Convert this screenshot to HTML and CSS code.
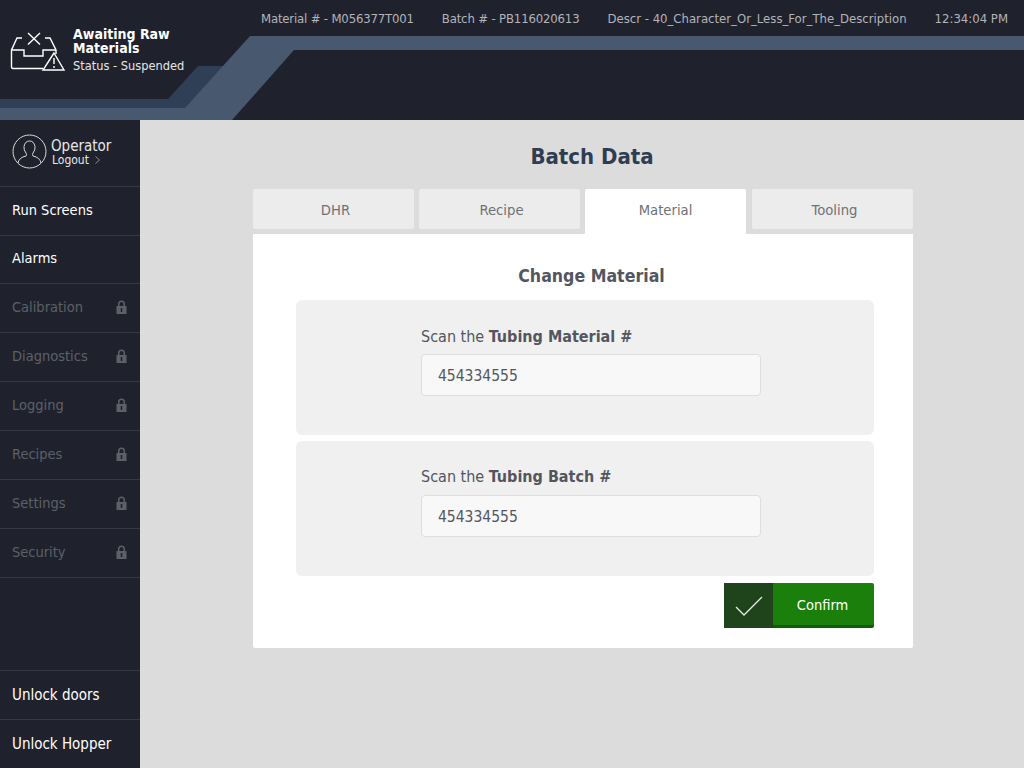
FILE: index.html
```html
<!DOCTYPE html>
<html lang="en">
<head>
    <meta charset="UTF-8">
    <meta name="viewport" content="width=device-width, initial-scale=1.0">
    <title>Batch Data</title>
    <link rel="stylesheet" href="styles.css">
</head>
<body>
    <svg class="defs" width="0" height="0">
        <symbol id="lock" viewBox="0 0 11 14">
            <path fill-rule="evenodd" d="M2 6V4a3.500 3.500 0 0 1 7 0v2h1.500v8H.5V6zm1.500 0h4V4a2 2 0 0 0-4 0zM4.700 8v4h1.600V8z"/>
        </symbol>
    </svg>

    <header class="topbar">
        <svg class="bands" width="1024" height="120" viewBox="0 0 1024 120">
            <polygon fill="#2e3f56" points="0,99 168,99 198,66 224,66 186,108 0,108"/>
            <polygon fill="#47586f" points="250,36 1024,36 1024,50 294,50 232,120 0,120 0,108 185,108"/>
        </svg>
        <div class="status">
            <svg class="status-icon" width="56" height="40" viewBox="0 0 56 40" fill="none" stroke="#fff" stroke-width="1.400">
                <path d="M12 7H7L1.500 19v17q0 1.500 1.500 1.500h30"/>
                <path d="M1.500 19H14v6h19v-6h13"/>
                <path d="M35 7h5l6 12v4"/>
                <path d="M18 2l12 11.500M30 2L18 13.500"/>
                <path d="M44 22L33 39h21zM44 27v6M44 35v2"/>
            </svg>
            <div class="status-text">
                <div class="status-title">Awaiting Raw Materials</div>
                <div class="status-sub">Status - Suspended</div>
            </div>
        </div>
        <div class="batch-info">
            <span class="info-material">Material # - M056377T001</span>
            <span class="info-batch">Batch # - PB116020613</span>
            <span>Descr - 40_Character_Or_Less_For_The_Description</span>
            <span>12:34:04 PM</span>
        </div>
    </header>

    <div class="layout">
        <nav class="sidebar">
            <div class="user">
                <svg width="35" height="35" viewBox="0 0 35 35" fill="none" stroke="#d8d8d8" stroke-width="1">
                    <circle cx="17.500" cy="17.500" r="16.500"/>
                    <path d="M6 29q1-5.500 8-7q1-1.500 0-3q-2.500-3-2-6.500q1-5.500 5.500-5.500t5.500 5.500q.5 3.500-2 6.500q-1 1.500 0 3q7 1.500 8 7"/>
                </svg>
                <div class="user-text">
                    <div class="user-name">Operator</div>
                    <div class="user-logout">Logout
                        <svg class="chevron" width="5" height="8" viewBox="0 0 5 8" fill="none" stroke="#8a8a8a"><path d="M.5.5L4.500 4L.5 7.500"/></svg>
                    </div>
                </div>
            </div>
            <a class="nav-item">Run Screens</a>
            <a class="nav-item nav-short">Alarms</a>
            <a class="nav-item locked">Calibration<svg class="lock" width="11" height="14"><use href="#lock"/></svg></a>
            <a class="nav-item locked">Diagnostics<svg class="lock" width="11" height="14"><use href="#lock"/></svg></a>
            <a class="nav-item locked">Logging<svg class="lock" width="11" height="14"><use href="#lock"/></svg></a>
            <a class="nav-item locked">Recipes<svg class="lock" width="11" height="14"><use href="#lock"/></svg></a>
            <a class="nav-item locked">Settings<svg class="lock" width="11" height="14"><use href="#lock"/></svg></a>
            <a class="nav-item locked">Security<svg class="lock" width="11" height="14"><use href="#lock"/></svg></a>
            <div class="nav-bottom">
                <a class="nav-item">Unlock doors</a>
                <a class="nav-item">Unlock Hopper</a>
            </div>
        </nav>

        <main class="content">
            <h1>Batch Data</h1>
            <div class="tabs">
                <button class="tab">DHR</button>
                <button class="tab">Recipe</button>
                <button class="tab active">Material</button>
                <button class="tab">Tooling</button>
            </div>
            <section class="panel">
                <h2>Change Material</h2>
                <div class="scan-card">
                    <label class="scan-label" for="material">Scan the <b>Tubing Material #</b></label>
                    <input class="scan-input" id="material" type="text" value="454334555">
                </div>
                <div class="scan-card">
                    <label class="scan-label" for="batch">Scan the <b>Tubing Batch #</b></label>
                    <input class="scan-input" id="batch" type="text" value="454334555">
                </div>
                <div class="actions">
                    <button class="confirm">
                        <span class="confirm-icon">
                            <svg width="28" height="20" viewBox="0 0 28 20" fill="none" stroke="#e4ebe2" stroke-width="1.300"><path d="M1 11l8 8L27 1"/></svg>
                        </span>
                        <span class="confirm-text">Confirm</span>
                    </button>
                </div>
            </section>
        </main>
    </div>
</body>
</html>
```

FILE: styles.css
```css
* {
    box-sizing: border-box;
}
body {
    margin: 0;
    width: 1024px;
    height: 768px;
    overflow: hidden;
    font-family: "DejaVu Sans", sans-serif;
    font-stretch: condensed;
    background-color: #dcdcdc;
}
.defs {
    position: absolute;
}
.topbar {
    position: relative;
    height: 120px;
    background-color: #1f222d;
}
.bands {
    position: absolute;
    top: 0;
    left: 0;
}
.status {
    position: absolute;
    top: 27px;
    left: 10px;
    display: flex;
    color: white;
}
.status-icon {
    margin: 4px 7px 0 0;
}
.status-title {
    width: 120px;
    font-size: 14px;
    font-weight: bold;
    line-height: 14px;
}
.status-sub {
    margin-top: 2px;
    font-size: 12.700px;
    line-height: 17px;
    color: #e6e6e6;
}
.batch-info {
    position: absolute;
    top: 10px;
    right: 16px;
    display: flex;
    gap: 28px;
    font-size: 13px;
    line-height: 17px;
    color: #b4b4b8;
}
.info-material {
    letter-spacing: -0.170px;
}
.info-batch {
    letter-spacing: -0.150px;
}
.layout {
    display: flex;
    height: 648px;
}
.sidebar {
    width: 140px;
    display: flex;
    flex-direction: column;
    background-color: #1f222d;
}
.user {
    display: flex;
    gap: 4px;
    height: 67px;
    padding: 14px 0 0 12px;
    border-bottom: 1px solid #353945;
    color: #e8e8e8;
}
.user-text {
    margin-top: 5px;
}
.user-name {
    font-size: 15px;
    line-height: 15px;
}
.user-logout {
    margin: -1px 0 0 1px;
    font-size: 12px;
    line-height: 14px;
}
.chevron {
    margin-left: 3px;
}
.nav-item {
    display: flex;
    align-items: center;
    justify-content: space-between;
    height: 49px;
    padding: 0 12px 2px;
    border-bottom: 1px solid #353945;
    font-size: 14.500px;
    color: white;
}
.nav-short {
    height: 48px;
    padding-bottom: 3px;
}
.nav-item.locked {
    padding-right: 13px;
    color: #5d6069;
}
.lock {
    fill: #5d6069;
}
.nav-bottom {
    margin-top: auto;
    border-top: 1px solid #353945;
}
.nav-bottom .nav-item {
    padding-bottom: 0;
    font-size: 15px;
}
.nav-bottom .nav-item:last-child {
    height: 48px;
    border-bottom: none;
}
.content {
    flex: 1;
    padding: 0 111px 0 113px;
}
h1 {
    margin: 23px 0 0;
    height: 46px;
    padding-left: 18px;
    font-size: 22px;
    line-height: 28px;
    font-weight: bold;
    text-align: center;
    color: #2f3d52;
}
.tabs {
    display: grid;
    grid-template-columns: 166px 166px 167px 161px;
    align-items: start;
}
.tab {
    width: 161px;
    height: 40px;
    padding: 1px 0 0 4px;
    border: none;
    border-radius: 2px;
    font-family: inherit;
    font-stretch: inherit;
    font-size: 14.700px;
    color: #6f7178;
    background-color: #ececec;
}
.tab.active {
    height: 45px;
    padding: 0 0 4px;
    border-radius: 2px 2px 0 0;
    background-color: white;
}
.panel {
    height: 414px;
    padding: 0 39px 0 43px;
    border-radius: 0 0 2px 2px;
    background-color: white;
}
h2 {
    margin: 0;
    height: 66px;
    padding: 30px 0 0 13px;
    font-size: 17.600px;
    line-height: 24px;
    font-weight: bold;
    text-align: center;
    color: #53565f;
}
.scan-card {
    height: 135px;
    margin-bottom: 6px;
    padding: 26px 113px 0 125px;
    border-radius: 6px;
    background-color: #f0f0f0;
}
.scan-card + .scan-card {
    padding-top: 25px;
}
.scan-label {
    display: block;
    font-size: 16px;
    line-height: 22px;
    color: #53565f;
}
.scan-input {
    display: block;
    width: 340px;
    height: 42px;
    margin-top: 6px;
    padding: 2px 16px 0;
    border: 1px solid #dedede;
    border-radius: 4px;
    font-family: inherit;
    font-stretch: inherit;
    font-size: 15.500px;
    color: #53565f;
    background-color: #f8f8f8;
}
.scan-card + .scan-card .scan-input {
    margin-top: 7px;
}
.actions {
    display: flex;
    justify-content: flex-end;
    margin-top: 7px;
}
.confirm {
    display: flex;
    width: 150px;
    height: 45px;
    padding: 0;
    border: none;
    border-bottom: 3px solid #0f5c06;
    border-radius: 2px;
    font-family: inherit;
    font-stretch: inherit;
    font-size: 14.500px;
    color: white;
    background-color: #1a7f0b;
}
.confirm-icon {
    display: flex;
    align-items: center;
    justify-content: center;
    width: 49px;
    height: 45px;
    margin-bottom: -3px;
    background-color: #1f441b;
}
.confirm-text {
    flex: 1;
    padding-right: 2px;
    line-height: 44px;
}
```
